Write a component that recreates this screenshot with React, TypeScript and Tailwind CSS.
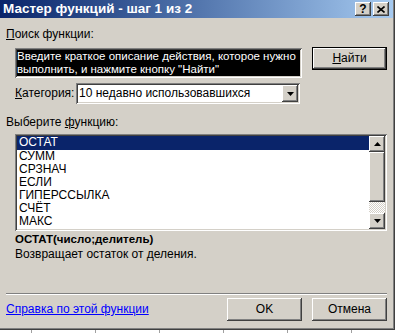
import React from 'react';

const font = { fontFamily: '"Liberation Sans", Arial, sans-serif' };

const raised =
  'bg-[#d4d0c8] shadow-[inset_-1px_-1px_#404040,inset_1px_1px_#ffffff,inset_-2px_-2px_#808080,inset_2px_2px_#d4d0c8]';
const sunken =
  'shadow-[inset_1px_1px_#808080,inset_-1px_-1px_#ffffff,inset_2px_2px_#404040,inset_-2px_-2px_#d4d0c8]';

const Arrow = ({ up }: { up?: boolean }) => (
  <svg width="7" height="4" viewBox="0 0 7 4">
    {up ? <path d="M3.5 0 L7 4 L0 4 Z" fill="#000" /> : <path d="M0 0 L7 0 L3.5 4 Z" fill="#000" />}
  </svg>
);

const functions = ['ОСТАТ', 'СУММ', 'СРЗНАЧ', 'ЕСЛИ', 'ГИПЕРССЫЛКА', 'СЧЁТ', 'МАКС'];

const App = () => {
  return (
    <div className="w-[396px] h-[333px] bg-white overflow-hidden text-[12px] leading-[13px] text-black" style={font}>
      <div className="w-[395px] h-[330px] bg-[#d4d0c8] shadow-[inset_-1px_-1px_#404040,inset_-2px_-2px_#808080] flex flex-col">
        {/* title bar */}
        <div className="h-[18px] w-[393px] flex items-center bg-gradient-to-r from-[#0a246a] to-[#a6caf0] pl-[3px] pr-[4px]">
          <span className="text-white font-bold text-[13.5px] leading-[18px] flex-1">Мастер функций - шаг 1 из 2</span>
          <div className={`w-[16px] h-[14px] flex items-center justify-center font-bold text-[12px] leading-none ${raised}`}>?</div>
          <div className={`w-[16px] h-[14px] ml-[2px] flex items-center justify-center ${raised}`}>
            <svg width="8" height="7" viewBox="0 0 8 7">
              <path d="M0.5 0.5 L7.5 6.5 M7.5 0.5 L0.5 6.5" stroke="#000" strokeWidth="1.6" />
            </svg>
          </div>
        </div>

        <div className="pl-[6px] flex flex-col">
          <div className="mt-[10px]">
            <span className="underline">П</span>оиск функции:
          </div>

          <div className="mt-[6px] flex items-start">
            <div className={`ml-[9px] mt-[1px] w-[287px] h-[30px] bg-black text-white text-[11.5px] px-[2px] pt-[2px] whitespace-nowrap ${sunken}`}>
              <div>Введите краткое описание действия, которое нужно</div>
              <div>выполнить, и нажмите кнопку "Найти"</div>
            </div>
            <div className="ml-[10px] w-[75px] h-[23px] flex items-center justify-center shadow-[inset_0_0_0_1px_#000,inset_-2px_-2px_#404040,inset_2px_2px_#ffffff,inset_-3px_-3px_#808080] bg-[#d4d0c8]">
              <span><span className="underline">Н</span>айти</span>
            </div>
          </div>

          <div className="mt-[5px] flex items-center h-[21px]">
            <span className="ml-[9px] w-[61px]">
              <span className="underline">К</span>атегория:
            </span>
            <div className={`w-[224px] h-[21px] bg-white flex items-center pl-[3px] pr-[2px] ${sunken}`}>
              <span className="flex-1">10 недавно использовавшихся</span>
              <div className={`w-[16px] h-[17px] flex items-center justify-center ${raised}`}>
                <Arrow />
              </div>
            </div>
          </div>

          <div className="mt-[12px]">
            Выберите <span className="underline">ф</span>ункцию:
          </div>

          <div className={`mt-[5px] ml-[9px] w-[372px] h-[97px] bg-white flex p-[2px] ${sunken}`}>
            <div className="flex-1 flex flex-col">
              {functions.map((f, i) => (
                <div
                  key={f}
                  className={`pl-[2px] ${i === 0 ? 'bg-[#0a246a] text-white h-[14px]' : 'h-[13px]'}`}
                >
                  {f}
                </div>
              ))}
            </div>
            <div className="w-[16px] flex flex-col">
              <div className={`h-[16px] flex items-center justify-center ${raised}`}>
                <Arrow up />
              </div>
              <div className={`h-[50px] ${raised}`} />
              <div className="flex-1 bg-[repeating-conic-gradient(#d4d0c8_0%_25%,#ffffff_0%_50%)] bg-[length:2px_2px]" />
              <div className={`h-[16px] flex items-center justify-center ${raised}`}>
                <Arrow />
              </div>
            </div>
          </div>

          <div className="mt-[2px] ml-[9px] font-bold text-[11.5px]">ОСТАТ(число;делитель)</div>
          <div className="mt-[2px] ml-[9px]">Возвращает остаток от деления.</div>

          <div className="mt-[32px] w-[381px] h-[2px] border-t border-[#808080] border-b border-b-white" />

          <div className="mt-[3px] flex items-center">
            <span className="text-[#0000ff] underline flex-1">Справка по этой функции</span>
            <div className={`w-[75px] h-[23px] flex items-center justify-center ${raised}`}>OK</div>
            <div className={`ml-[10px] mr-[8px] w-[75px] h-[23px] flex items-center justify-center ${raised}`}>Отмена</div>
          </div>
        </div>
      </div>
      <div className="flex h-[3px]">
        <div className="w-[32px] border-r border-[#a0a0a0]" />
        {[0, 1, 2, 3, 4].map((i) => (
          <div key={i} className="w-[64px] border-r border-[#a0a0a0]" />
        ))}
      </div>
    </div>
  );
};

export default App;
